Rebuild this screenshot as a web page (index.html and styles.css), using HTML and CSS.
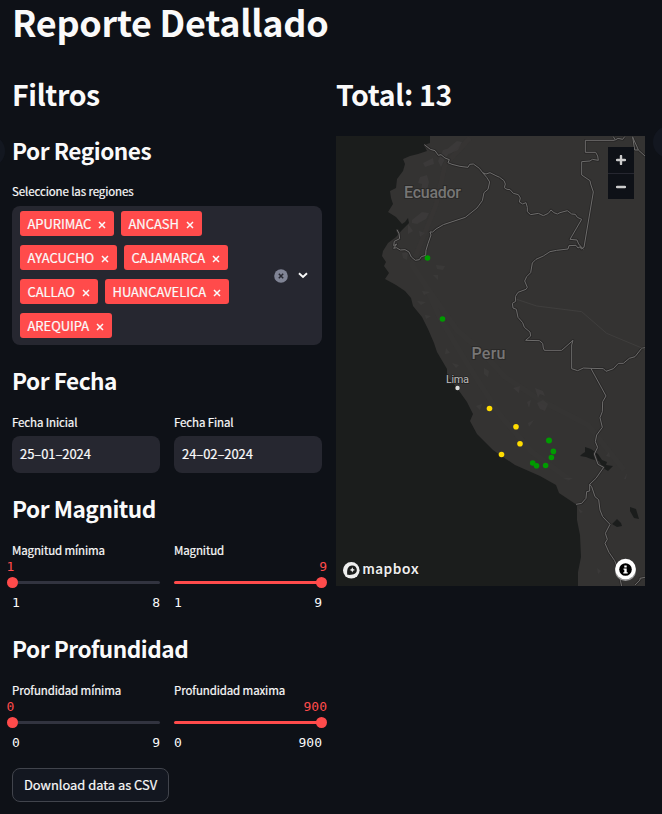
FILE: index.html
```html
<!DOCTYPE html>
<html lang="es">
<head>
<meta charset="utf-8">
<title>Reporte Detallado</title>
<link rel="stylesheet" href="styles.css">
</head>
<body>
<main class="page">
  <span class="edge edge-left"></span>
  <span class="edge edge-right"></span>
  <h1>Reporte Detallado</h1>
  <div class="columns">
    <section class="filters">
      <h2>Filtros</h2>

      <h3>Por Regiones</h3>
      <div class="label">Seleccione las regiones</div>
      <div class="multiselect">
        <div class="tags">
          <span class="tag" style="width:94px">APURIMAC<svg viewBox="0 0 8 8"><path d="M1 1l6 6M7 1l-6 6"/></svg></span>
          <span class="tag" style="width:81px">ANCASH<svg viewBox="0 0 8 8"><path d="M1 1l6 6M7 1l-6 6"/></svg></span>
          <span class="tag" style="width:97px">AYACUCHO<svg viewBox="0 0 8 8"><path d="M1 1l6 6M7 1l-6 6"/></svg></span>
          <span class="tag" style="width:104px">CAJAMARCA<svg viewBox="0 0 8 8"><path d="M1 1l6 6M7 1l-6 6"/></svg></span>
          <span class="tag" style="width:78px">CALLAO<svg viewBox="0 0 8 8"><path d="M1 1l6 6M7 1l-6 6"/></svg></span>
          <span class="tag" style="width:124px">HUANCAVELICA<svg viewBox="0 0 8 8"><path d="M1 1l6 6M7 1l-6 6"/></svg></span>
          <span class="tag" style="width:92px">AREQUIPA<svg viewBox="0 0 8 8"><path d="M1 1l6 6M7 1l-6 6"/></svg></span>
        </div>
        <div class="select-icons">
          <svg width="14" height="14" viewBox="0 0 14 14"><circle cx="7" cy="7" r="6.8" fill="#808495"/><path d="M4.800 4.800l4.400 4.400M9.200 4.800l-4.400 4.400" stroke="#262730" stroke-width="1.5"/></svg>
          <svg width="10" height="7" viewBox="0 0 10 7"><path d="M1 1.200l4 3.800 4-3.800" fill="none" stroke="#fafafa" stroke-width="1.900"/></svg>
        </div>
      </div>

      <h3>Por Fecha</h3>
      <div class="pair">
        <div><div class="label">Fecha Inicial</div><div class="input">25–01–2024</div></div>
        <div><div class="label">Fecha Final</div><div class="input">24–02–2024</div></div>
      </div>

      <h3>Por Magnitud</h3>
      <div class="pair">
        <div><div class="label">Magnitud mínima</div>
          <div class="slider low"><div class="value">1</div><div class="track"><i></i></div><div class="range"><span>1</span><span>8</span></div></div></div>
        <div><div class="label">Magnitud</div>
          <div class="slider high"><div class="value">9</div><div class="track"><i></i></div><div class="range"><span>1</span><span>9</span></div></div></div>
      </div>

      <h3>Por Profundidad</h3>
      <div class="pair">
        <div><div class="label">Profundidad mínima</div>
          <div class="slider low"><div class="value">0</div><div class="track"><i></i></div><div class="range"><span>0</span><span>9</span></div></div></div>
        <div><div class="label">Profundidad maxima</div>
          <div class="slider high"><div class="value">900</div><div class="track"><i></i></div><div class="range"><span>0</span><span>900</span></div></div></div>
      </div>

      <button class="download">Download data as CSV</button>
    </section>

    <section class="result">
      <h2>Total: 13</h2>
      <div class="map">
        <svg class="canvas" viewBox="336 136 309 450">
          <rect x="336" y="136" width="309" height="450" fill="#1b1d1c"/>
          <!-- land -->
          <path fill="#343332" d="M430 136V143L424 145 427 151 418 154 410 156 403 159 405 164 403 171 397 179 396 188 390 191 391 198 393 204 388 212 396 217 402 224 405 222 408 218 409 223 402 230 396 237 388 243 383 251 382 256 386 262 384 266 389 273 385 279 396 285 405 291 411 298 413 306 422 317 428 329 434 343 437 352 447 369 447 376 457 388 467 402 473 414 470 421 477 434 493 450 500 455 515 465 540 476 556 485 559 493 577 505 577 520 580 535 581 557 578 572 578 586H645V136Z"/>
          <!-- relief -->
          <g fill="#41403f" opacity=".5">
            <path d="M446 150l11-9 5 1-4 8-9 4zM423 163l10-5 1 6-9 3zM420 177l7-2 2 7-3 12-5-4 1-6-4-1zM412 220l10-8 7 1-3 6-9 5-5-1zM408 224l5 7-5 3zM419 231l6 2-5 4zM402 253l6-1-1 8-4-2zM436 265l9 1-2 4-6-1zM422 291l8 1-6 3zM417 301l9 1-5 3zM433 275h5v5zM443 150l10-3-8 12-4 8-3-6z"/>
            <path d="M513 388l7-2-1 7zM535 388l8 3 2 5-5-2-2 4zM537 403l6-3 5 4-3 7-5-2zM527 402l4-2-2 8zM528 423l6-3-5 7zM606 456l3-4 1 5zM624 479l3-6-1 6zM563 478h10l-4 2zM597 568l4 3-3 3zM578 508l5 4-3 1z"/>
            <path d="M452 363l7 2-3 3zM484 368l5 3-1 6-4-3zM476 406l6-2-2 6zM446 348l4 5-5 1zM425 315l6 1-5 3z"/>
          </g>
          <g fill="none" stroke="#3a3938" stroke-width="5" opacity=".25" stroke-linejoin="round">
            <path d="M470 138L445 165 436 205 422 240 412 265 430 292 457 330 482 352 505 377 540 400 588 425 624 470"/>
            <path d="M425 285L440 318 468 365 500 415 532 452 570 480"/>
          </g>
          <!-- lakes -->
          <g fill="#1b1d1c"><path d="M582 454l3-2 0-5 6 2 7 5 4 6 5 2-1 3 7 1-5 5-5-3-4-7-8-2-5-2-6-1zM612 524l5-5 4 4 1 3-5 1zM630 507l6 2 3 10-5-1-4-7z"/></g>
          <!-- borders -->
          <g transform="translate(330 130) scale(.33333)" fill="none" stroke-linejoin="round">
            <g stroke="#282727" stroke-width="8">
              <path id="b1" d="M283 44L301 58 315 62 325 76 333 74 345 84 358 89 354 98 366 103 390 109 414 112 419 103 430 102 448 115 458 128 468 132 480 128 498 137 509 142 522 152 526 162 523 173 531 178 540 179 550 190 565 194 571 204 568 216 578 222 588 218 592 232 592 245 602 254 625 250 640 257 655 250 663 240 672 248 682 252 690 248 712 242 725 252 736 253 742 262 755 268 720 328 741 330 746 342 760 358"/>
              <path id="b2" d="M854 31H766V67H797L803 78 805 91 787 88 780 93 755 95V135L780 152 782 162 790 186 762 352 754 357 751 350 744 354 738 346 717 347 714 357 680 361 660 365 640 378 618 388 607 399 602 428 590 440 584 453 592 472 588 478 564 487 556 500 557 514 547 520 549 534 559 538 564 562 578 578 583 592 600 606 602 618 587 631 628 632 638 640 640 654 643 661H695L729 631 725 645V716L743 722 760 714 782 715 820 716 828 724 850 716 865 700 880 700 898 685 915 680 935 655 945 653"/>
              <path id="b3" d="M458 128l12 14 9 14-5 22-12 10-5 24-16 22-35 28-66 22-22 13-10 9-8 0 3 9-9 26-6 20-1 15-13 4-6 9-12 2-12-10-7-15-12-7-14 1-12-7-8 2 9-13-9 5 2-13 16-8-2-15-6-12"/>
              <path id="b4" d="M782 714L828 798 818 815 817 845 810 863 817 892 800 915 796 935 803 952 793 972 804 1003 821 1012 798 1045 779 1063V1083L770 1085 768 1105 755 1120 738 1123M779 1063L785 1070 795 1100 806 1109 810 1140 818 1160 840 1183 826 1210 832 1228 825 1240 837 1267 854 1292 862 1312 875 1368"/>
              <path id="b5" d="M850 20l6 10 8-5 14 3 6-8M908 20l6 40 11 0-5-12-12-26M925 60l20 18"/>
              <path id="b6" d="M915 1365l15-15 0-5 15-3"/>
            </g>
            <g stroke="#6d6c6b" stroke-width="3">
              <use href="#b1"/><use href="#b2"/><use href="#b3"/><use href="#b4"/><use href="#b5"/><use href="#b6"/>
            </g>
            <path d="M560 508l60 20 135 17 75 65 115 48" stroke="#3f3e3d" stroke-width="3"/>
          </g>
          <g class="map-text">
            <text x="404" y="198" textLength="57" class="country">Ecuador</text>
            <text x="471.500" y="359" textLength="34" class="country">Peru</text>
            <text x="446" y="383" textLength="23" class="city">Lima</text>
          </g>
          <circle cx="457.500" cy="388" r="2.200" fill="#ddd"/>
          <g fill="#ffdc00"><circle cx="489.500" cy="408.500" r="2.800"/><circle cx="516" cy="426.700" r="2.800"/><circle cx="520" cy="443.800" r="2.800"/><circle cx="501.500" cy="454.500" r="2.800"/></g>
          <g fill="#009b00"><circle cx="427.500" cy="258" r="2.800"/><circle cx="442.500" cy="319" r="2.800"/><circle cx="549" cy="440.500" r="3"/><circle cx="553.400" cy="451.400" r="2.800"/><circle cx="551.400" cy="457.500" r="2.800"/><circle cx="545.600" cy="465.500" r="2.800"/><circle cx="532.700" cy="463" r="2.800"/><circle cx="536.500" cy="465.800" r="2.800"/></g>
          <!-- map provider logo -->
          <circle cx="351.300" cy="570.300" r="8.300" fill="#eee"/>
          <path d="M347.300 574.800c-.7-5 .5-9 4.700-9.200 3-.1 4.800 2 4.800 4.400 0 4-4 5.300-9.500 4.800z" fill="#1b1d1c"/>
          <path d="M352.300 567.200l.8 1.900 1.900.8-1.900.8-.8 1.900-.8-1.900-1.900-.8 1.900-.8z" fill="#eee"/>
          <text x="362.500" y="574.300" textLength="56" class="brand">mapbox</text>
          <!-- attribution -->
          <circle cx="625.500" cy="570.500" r="10.500" fill="#999"/>
          <circle cx="625.500" cy="569" r="10.300" fill="#fff"/>
          <circle cx="625.500" cy="569.500" r="6.300" fill="#000"/>
          <path d="M624.300 565.500h2.400v2h-2.400zM623.500 568.500h3.200v3.700h1v1.300h-4.400v-1.300h1v-2.400h-.8z" fill="#fff"/>
        </svg>
        <div class="zoom">
          <span><svg width="10" height="10" viewBox="0 0 10 10"><path d="M5 1v8M1 5h8"/></svg></span>
          <span><svg width="10" height="10" viewBox="0 0 10 10"><path d="M1 5h8"/></svg></span>
        </div>
      </div>
    </section>
  </div>
</main>
</body>
</html>
```
FILE: styles.css
```css
* { box-sizing: border-box; }
body {
  margin: 0;
  background: #0e1117;
  color: #fafafa;
  font-family: "Noto Sans CJK SC", "Noto Sans", sans-serif;
  font-size: 12.6px;
}
.page { position: relative; height: 814px; padding-left: 12px; overflow: hidden; }
.edge { position: absolute; width: 32px; height: 32px; border-radius: 50%; background: #131720; }
.edge-left { left: -27px; top: 135px; }
.edge-right { left: 653px; top: 126px; }
h1, h2, h3 { margin: 0; white-space: nowrap; }
h1 { height: 46px; line-height: 42px; font-size: 36px; font-weight: 700; letter-spacing: -.3px; }
h2 { height: 36px; line-height: 32px; font-size: 28.5px; font-weight: 600; letter-spacing: -.35px; }
h3 { height: 36px; line-height: 33px; font-size: 22.6px; font-weight: 600; letter-spacing: -.48px; margin: 19px 0 12px; }
.columns { display: flex; gap: 14px; padding-top: 32px; }
.filters { width: 310px; }
.filters h2 + h3 { margin: 20px 0 11px; }
.result { width: 309px; }
.label {
  height: 20px;
  line-height: 20px;
  margin-bottom: 4px;
  white-space: nowrap;
  font-size: 11.5px;
  letter-spacing: -.11px;
  -webkit-text-stroke: .2px #fafafa;
}
.multiselect {
  display: flex;
  height: 139px;
  margin-top: 5px;
  padding: 5px 14px 0 8px;
  border-radius: 8px;
  background: #262730;
}
.tags { display: flex; flex-wrap: wrap; flex: 1; align-content: flex-start; gap: 9px 7px; }
.tag {
  display: flex;
  align-items: center;
  justify-content: space-between;
  height: 25px;
  padding: 0 8px 0 7.5px;
  border-radius: 3px;
  background: #ff4b4b;
  font-size: 13px;
  line-height: 25px;
  letter-spacing: -.05px;
  -webkit-text-stroke: .2px #fafafa;
}
.tag svg { width: 8px; height: 8px; margin-top: 3px; fill: none; stroke: #fafafa; stroke-width: 1.5; }
.select-icons { display: flex; align-items: center; gap: 10px; padding-bottom: 5px; }
.pair { display: grid; grid-template-columns: 148px 148px; gap: 14px; }
.input {
  height: 37px;
  line-height: 36px;
  padding-left: 8px;
  border-radius: 8px;
  background: #262730;
  font-size: 13px;
  letter-spacing: -.08px;
  -webkit-text-stroke: .2px #fafafa;
}
.slider { height: 53px; margin-top: -4px; font: 13px/16px "DejaVu Sans Mono", monospace; }
.value { height: 16px; line-height: 14px; margin: 0 -5px; color: #ff4b4b; }
.low .value { margin-left: -5.5px; }
.high .value { text-align: right; }
.track { display: flex; align-items: center; height: 3px; margin-top: 5px; border-radius: 2px; background: #31333f; }
.high .track { background: #ff4b4b; justify-content: flex-end; }
.track i { width: 11px; height: 11px; border-radius: 50%; background: #ff4b4b; margin: 0 -5px 0 -5.5px; flex: none; }
.range { display: flex; justify-content: space-between; margin-top: 11px; }
.download {
  display: block;
  width: 157px;
  height: 34px;
  margin-top: 15px;
  padding: 0 0 2px;
  border: 1px solid #41444c;
  border-radius: 8px;
  background: #131720;
  color: #fafafa;
  font: 12.9px "Noto Sans CJK SC", sans-serif;
  -webkit-text-stroke: .2px #fafafa;
}
.map { position: relative; width: 309px; height: 450px; margin-top: 22px; }
.canvas { display: block; width: 309px; height: 450px; }
.country { font: 500 16px Roboto, sans-serif; fill: #777675; stroke: #2a2928; stroke-width: 2px; paint-order: stroke; }
.city { font: 11px Roboto, sans-serif; fill: #bbb; stroke: #222; stroke-width: 1.5px; paint-order: stroke; }
.brand { font: 700 14.5px Lato, sans-serif; fill: #eee; stroke: #111; stroke-width: 1px; paint-order: stroke; }
.zoom { position: absolute; left: 272px; top: 11px; width: 26px; height: 52px; background: #0e1117; }
.zoom span { display: flex; align-items: center; justify-content: center; height: 26px; }
.zoom span + span { border-top: 1px solid #262730; }
.zoom path { fill: none; stroke: #ccc; stroke-width: 2.4; stroke-linecap: round; }
```
